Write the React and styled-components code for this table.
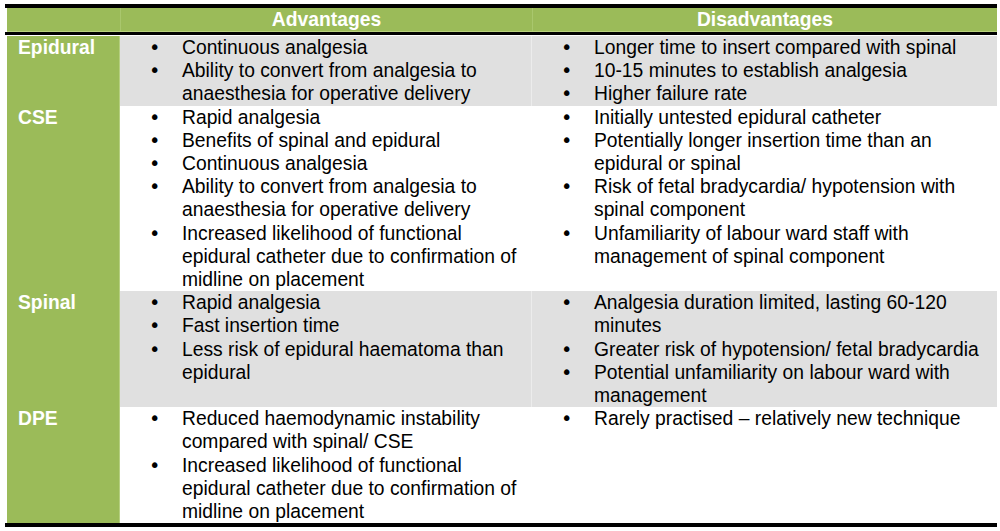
import React from "react";
import styled, { createGlobalStyle } from "styled-components";

const GlobalStyle = createGlobalStyle`
  html, body {
    margin: 0;
    padding: 0;
    background: #ffffff;
  }
  body {
    font-family: "Liberation Sans", Arial, sans-serif;
    color: #000000;
  }
`;

const rows = [
  {
    label: "Epidural",
    shaded: true,
    advantages: [
      "Continuous analgesia",
      "Ability to convert from analgesia to anaesthesia for operative delivery",
    ],
    disadvantages: [
      "Longer time to insert compared with spinal",
      "10-15 minutes to establish analgesia",
      "Higher failure rate",
    ],
  },
  {
    label: "CSE",
    shaded: false,
    advantages: [
      "Rapid analgesia",
      "Benefits of spinal and epidural",
      "Continuous analgesia",
      "Ability to convert from analgesia to anaesthesia for operative delivery",
      "Increased likelihood of functional epidural catheter due to confirmation of midline on placement",
    ],
    disadvantages: [
      "Initially untested epidural catheter",
      "Potentially longer insertion time than an epidural or spinal",
      "Risk of fetal bradycardia/ hypotension with spinal component",
      "Unfamiliarity of labour ward staff with management of spinal component",
    ],
  },
  {
    label: "Spinal",
    shaded: true,
    advantages: [
      "Rapid analgesia",
      "Fast insertion time",
      "Less risk of epidural haematoma than epidural",
    ],
    disadvantages: [
      "Analgesia duration limited, lasting 60-120 minutes",
      "Greater risk of hypotension/ fetal bradycardia",
      "Potential unfamiliarity on labour ward with management",
    ],
  },
  {
    label: "DPE",
    shaded: false,
    advantages: [
      "Reduced haemodynamic instability compared with spinal/ CSE",
      "Increased likelihood of functional epidural catheter due to confirmation of midline on placement",
    ],
    disadvantages: ["Rarely practised \u2013 relatively new technique"],
  },
];

const Page = styled.div`
  padding: 4px 3px 0 7px;
  width: 990px;
`;

const Rule = styled.div`
  height: ${(p) => p.$size}px;
  margin-left: -2px;
  width: 992px;
  background: #000000;
`;

const HeaderRow = styled.div`
  display: grid;
  grid-template-columns: 113px 412px 465px;
  height: 23px;
  background: #9bbb59;
  border-bottom: 1px solid #b9d17f;
`;

const HeaderCell = styled.div`
  color: #ffffff;
  font-weight: 700;
  font-size: 19.3px;
  line-height: 23px;
  text-align: center;
  border-left: ${(p) => (p.$divider ? "1px solid #a9c76d" : "none")};
`;

const Gap = styled.div`
  height: 1px;
`;

const Row = styled.div`
  display: grid;
  grid-template-columns: 113px 412px 465px;
  background: ${(p) => (p.$shaded ? "#e0e0e0" : "#ffffff")};
`;

const Label = styled.div`
  background: #9bbb59;
  border-right: 1px solid #b5cf80;
  color: #ffffff;
  font-weight: 700;
  font-size: 19.3px;
  line-height: 23.2px;
  padding-left: 11px;
`;

const Cell = styled.ul`
  margin: 0;
  padding: 0 4px 0 0;
  list-style: none;
  border-right: ${(p) => (p.$divider ? "1px solid #ececec" : "none")};
`;

const Item = styled.li`
  display: grid;
  grid-template-columns: 62px 1fr;
  font-size: 19.3px;
  line-height: 23.2px;
`;

const Bullet = styled.span`
  padding-left: 29px;
  font-family: "DejaVu Sans", sans-serif;
  font-size: 19.3px;
  line-height: 23.2px;
`;

const BulletList = ({ items, divider }) => (
  <Cell $divider={divider}>
    {items.map((text) => (
      <Item key={text}>
        <Bullet>{"\u2022"}</Bullet>
        <span>{text}</span>
      </Item>
    ))}
  </Cell>
);

export default function App() {
  return (
    <Page>
      <GlobalStyle />
      <Rule $size={4} />
      <HeaderRow>
        <HeaderCell />
        <HeaderCell $divider>Advantages</HeaderCell>
        <HeaderCell $divider>Disadvantages</HeaderCell>
      </HeaderRow>
      <Rule $size={3} />
      <Gap />
      {rows.map((row) => (
        <Row key={row.label} $shaded={row.shaded}>
          <Label>{row.label}</Label>
          <BulletList items={row.advantages} divider={row.shaded} />
          <BulletList items={row.disadvantages} />
        </Row>
      ))}
      <Rule $size={4} />
    </Page>
  );
}
